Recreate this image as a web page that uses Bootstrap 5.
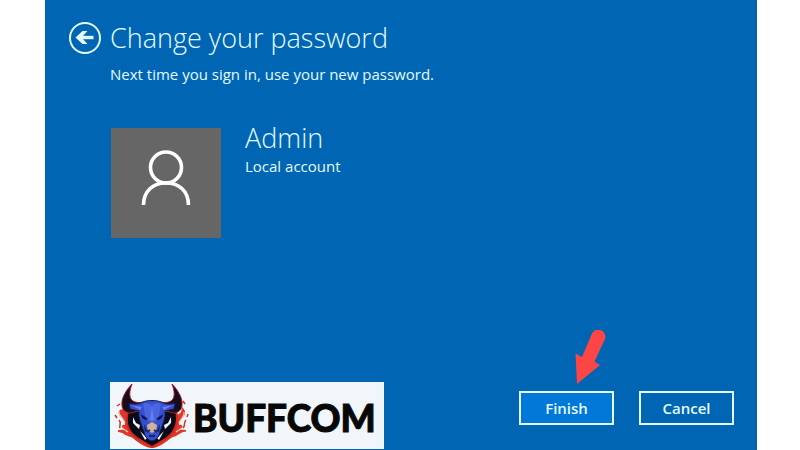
<!DOCTYPE html>
<html lang="en">
<head>
<meta charset="utf-8">
<meta name="viewport" content="width=device-width, initial-scale=1">
<title>Change your password</title>
<link href="https://cdn.jsdelivr.net/npm/bootstrap@5.3.0/dist/css/bootstrap.min.css" rel="stylesheet">
<style>
  body { font-family: "Open Sans", "Noto Sans", sans-serif; background: #fff; }
  .screen { background: #0066b4; color: #e4fbff; margin: 0 43px 0 45px; padding: 20px 23px 1px 24px; }
  .back-btn { width: 32px; height: 32px; color: #e4fbff; }
  .indent { margin-left: 41px; }
  .head-row { gap: 9px; }
  .title { font-size: 27px; line-height: 36px; font-weight: 350; }
  .copy { font-size: 15px; line-height: 20px; }
  .subtitle { margin-top: 8px; }
  .account { margin-top: 44px; padding-left: 1px; gap: 24px; }
  .avatar { width: 110px; height: 110px; background: #666; }
  .user-name { font-size: 27px; line-height: 28px; font-weight: 300; margin-top: -4px; margin-bottom: 4px; }
  .brand { background: #f1f6fb; height: 67px; width: 274px; padding-left: 4px; }
  .brand-name { font-family: Lato, sans-serif; font-weight: 900; font-size: 37px; line-height: 40px; color: #080808; -webkit-text-stroke: 1px #080808; margin-left: 4px; margin-top: 4px; }
  .actions { gap: 25px; margin-top: 9px; }
  .action-btn { width: 95px; height: 34px; border: 2px solid #e4fbff; color: #e4fbff; font-size: 15px; line-height: 20px; font-weight: 600; }
  .action-btn:hover { border-color: #fff; color: #fff; }
  .primary { background: #0078d7; }
  .pointer { left: 55px; bottom: 40px; }
</style>
<script src="https://cdn.jsdelivr.net/npm/bootstrap@5.3.0/dist/js/bootstrap.bundle.min.js"></script>
</head>
<body>
<main class="screen min-vh-100 d-flex flex-column">
  <header>
    <div class="head-row d-flex align-items-center">
      <button type="button" class="back-btn btn p-0 border-0 rounded-circle d-flex" aria-label="Back">
        <svg width="32" height="32" viewBox="0 0 32 32" fill="none" stroke="currentColor" aria-hidden="true">
          <circle cx="16" cy="16" r="15" stroke-width="2"/>
          <path d="M24.500 15.500H10" stroke-width="3.400"/>
          <path d="M6.500 15.500L13.500 9H18.500L12.500 15.500L18.500 22H13.500Z" fill="currentColor" stroke="none"/>
        </svg>
      </button>
      <h1 class="title mb-0">Change your password</h1>
    </div>
    <p class="copy subtitle indent mb-0">Next time you sign in, use your new password.</p>
  </header>
  <section class="account indent d-flex">
    <div class="avatar flex-shrink-0">
      <svg width="110" height="110" viewBox="0 0 110 110" fill="none" stroke="#fff" stroke-width="3.6" role="img" aria-label="User">
        <circle cx="55" cy="39.500" r="15.500"/>
        <path d="M32.500 77C32.500 63 42 55 55 55S77.500 63 77.500 77"/>
      </svg>
    </div>
    <div>
      <h2 class="user-name">Admin</h2>
      <p class="copy mb-0">Local account</p>
    </div>
  </section>
  <footer class="indent mt-auto d-flex justify-content-between align-items-start">
    <div class="brand d-flex align-items-center">
      <svg class="flex-shrink-0" width="75" height="67" viewBox="0 0 75 67" role="img" aria-label="Bull emblem">
        <path d="M11 27C3 27 3 32 8 36C10 38 11 40 11 43C8 42 6 45 11 48C7 48 3 47 4 50C9 50 11 54 17 55C23 59 30 66 38 66C46 66 52 59 59 55C65 54 67 49 72 50C73 47 69 48 65 48C71 45 68 42 65 43C65 39 67 38 69 35C73 31 71 28 68 25C68 30 66 32 63 33L14 34Z" fill="#d93a29"/>
        <path d="M5 29C4 34 10 36 11 41M70 30C71 35 66 37 65 41M8 46L14 50M68 46L62 50" fill="none" stroke="#f3c4b7" stroke-width="1.200"/>
        <path d="M3 24L6 22M5 38C8 41 5 43 6 46M1 33L3 36M71 22L69 19M72 38C69 41 72 43 69 46M74 32L73 35" fill="none" stroke="#cf3424" stroke-width="1.500"/>
        <path d="M14 29L62 29C65 40 61 50 53 56L38 65L23 56C14 50 11 40 14 29Z" fill="#0b0b17" stroke="#d8271e" stroke-width="2"/>
        <path d="M19 35L22 41L26 43L25 47L19 41ZM57 35L54 41L50 43L51 47L57 41ZM26 49L33 56L31 58ZM50 49L43 56L45 58Z" fill="#eef4fc"/>
        <path d="M18 2C12 8 7 17 8 23C8 28 12 31 17 31L27 28L30 20C19 22 12 18 18 2ZM58 2C64 8 69 17 68 23C68 28 64 31 59 31L49 28L46 20C57 22 64 18 58 2Z" fill="#160d1d" stroke="#a51d25"/>
        <path d="M15 21C20 23 25 22 29 20C33 18 43 18 47 20C51 22 56 23 61 21L60 27L51 29C52 37 48 43 46 50C45 55 42 58 38 59C34 58 31 55 30 50C28 43 24 37 25 29L16 27Z" fill="#3450d0" stroke="#141a52"/>
        <path d="M29 22C32 20 36 21 38 24C40 21 44 20 47 22L45 33L41 40H35L31 33Z" fill="#4966df"/>
        <path d="M17 23L28 25L26 28ZM59 23L48 25L50 28ZM38 25L36 38H40Z" fill="#6681ec"/>
        <path d="M27 32L34 37L31 38L28 36ZM49 32L42 37L45 38L48 36ZM30 42L33 49L31 50ZM46 42L43 49L45 50Z" fill="#10184f"/>
        <path d="M33 43L38 40L43 43L42 49L38 51L34 49Z" fill="#ceb299"/>
        <path d="M33 50L36 48M43 50L40 48M35 54H41" stroke="#17225f" stroke-width="2"/>
      </svg>
      <span class="brand-name">BUFFCOM</span>
    </div>
    <div class="actions d-flex">
      <div class="position-relative">
        <button type="button" class="action-btn primary btn rounded-0 p-0 d-block">Finish</button>
        <svg class="pointer position-absolute" width="32" height="55" viewBox="0 0 32 55" aria-hidden="true">
          <path d="M17.500 4.500A7 7 0 0 1 31 9L20.500 31.500L26 35L3 54L1.500 23.500L8 27Z" fill="#fc4544"/>
        </svg>
      </div>
      <button type="button" class="action-btn btn rounded-0 p-0">Cancel</button>
    </div>
  </footer>
</main>
</body>
</html>
